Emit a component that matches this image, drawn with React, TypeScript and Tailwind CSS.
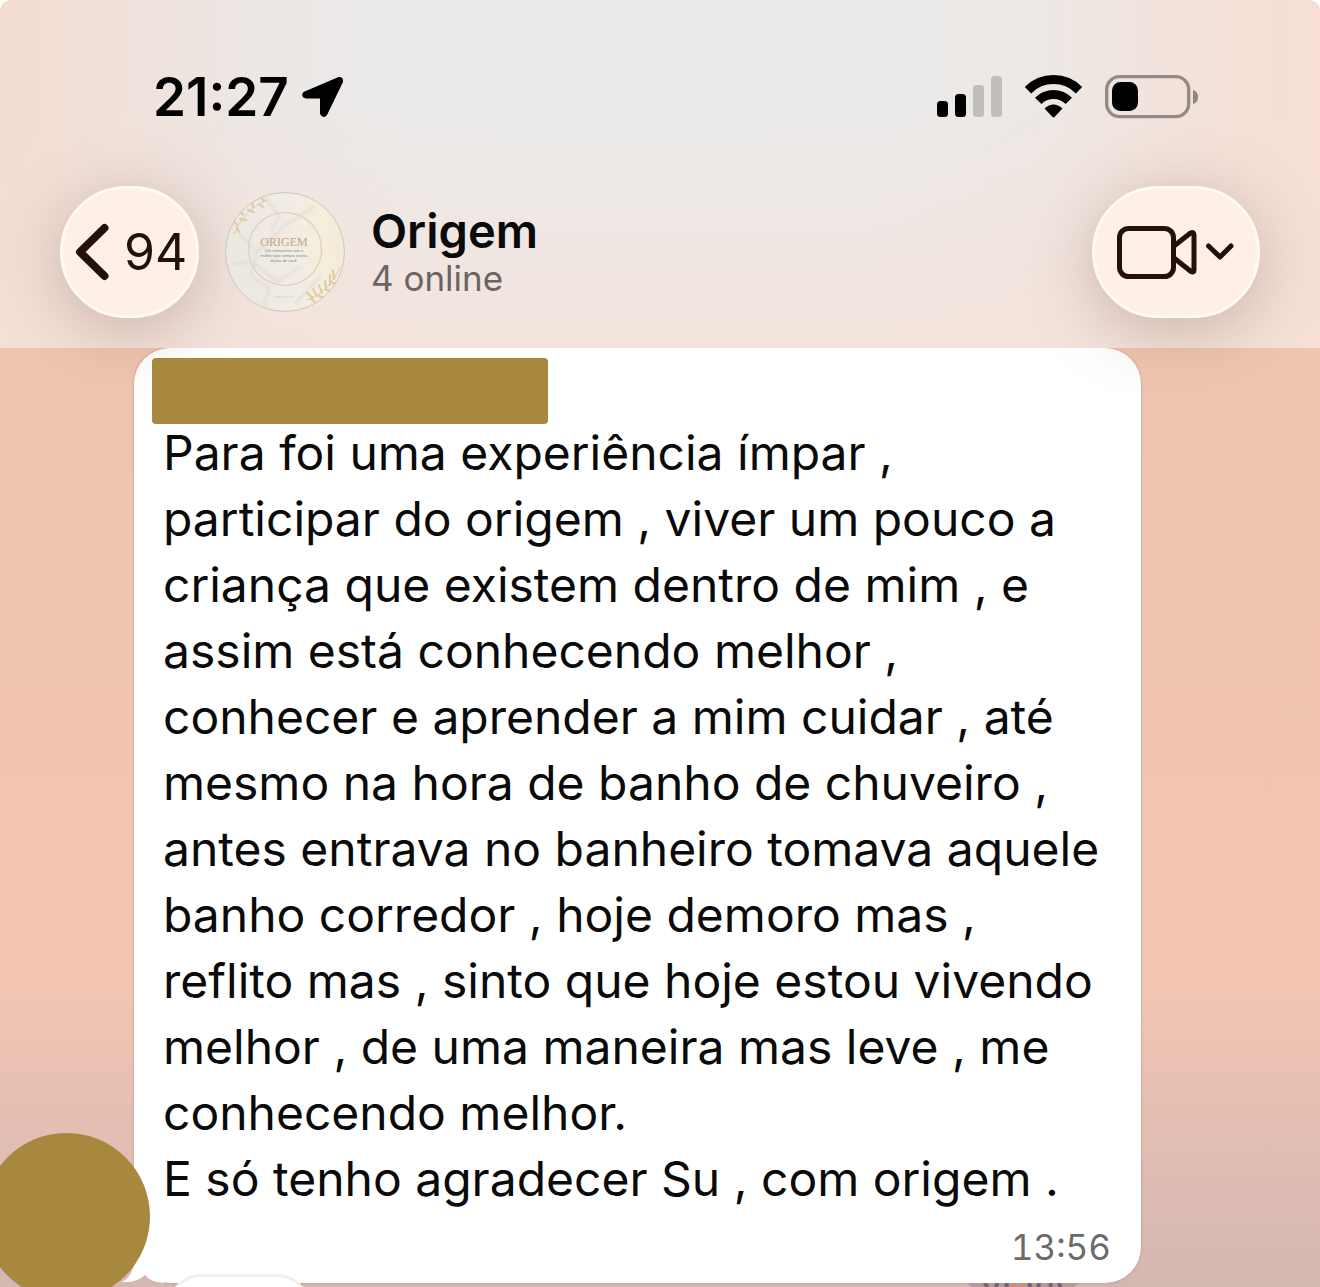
const MESSAGE = [
  "Para foi uma experiência ímpar ,",
  "participar do origem , viver um pouco a",
  "criança que existem dentro de mim , e",
  "assim está conhecendo melhor ,",
  "conhecer e aprender a mim cuidar , até",
  "mesmo na hora de banho de chuveiro ,",
  "antes entrava no banheiro tomava aquele",
  "banho corredor , hoje demoro mas ,",
  "reflito mas , sinto que hoje estou vivendo",
  "melhor , de uma maneira mas leve , me",
  "conhecendo melhor.",
  "E só tenho agradecer Su , com origem .",
].join("\n");

function LocationIcon() {
  return (
    <svg className="h-[44px] w-[44px]" viewBox="0 0 44 44" aria-hidden="true">
      <path
        d="M38 4.500 4 19Q3 20.800 5.500 21H21.500V38Q22.500 40.500 24 38.500L39.500 6.500Q40 4 38 4.500Z"
        stroke="#000"
        strokeWidth="5"
        strokeLinejoin="round"
      />
    </svg>
  );
}

function SignalIcon() {
  return (
    <svg className="h-[44px] w-[66px]" viewBox="0 0 66 44" aria-hidden="true">
      <rect x="0" y="26" width="11" height="16" rx="3.500" />
      <rect x="18" y="19" width="11" height="23" rx="3.500" />
      <rect x="36" y="10" width="11" height="32" rx="3.500" fill="#bfbebd" />
      <rect x="54" y="1" width="11" height="41" rx="3.500" fill="#bfbebd" />
    </svg>
  );
}

function WifiIcon() {
  return (
    <svg className="h-[44px] w-[58px]" viewBox="0 0 58 44" aria-hidden="true">
      <g fill="none" stroke="#000" strokeWidth="9">
        <path d="M3 15.200A36 36 0 0 1 54 15.200" />
        <path d="M13.200 25.900A21.600 21.600 0 0 1 43.800 25.900" />
      </g>
      <path d="M19.500 33.500Q28.500 25.500 37.500 33.500L29.500 42Q28.500 42.900 27.500 42Z" />
    </svg>
  );
}

function BatteryIcon() {
  return (
    <svg className="h-[44px] w-[94px]" viewBox="0 0 94 44" aria-hidden="true">
      <rect
        x="1.700"
        y="1.700"
        width="82"
        height="40"
        rx="13"
        fill="none"
        stroke="#938a86"
        strokeWidth="3.300"
      />
      <rect x="7" y="7" width="26" height="29" rx="8.500" />
      <path d="M88 15Q93 16.500 93 22Q93 27.500 88 29Z" fill="#8f8683" />
    </svg>
  );
}

function BackIcon() {
  return (
    <svg className="h-[60px] w-[36px]" viewBox="0 0 36 60" aria-hidden="true">
      <path
        d="M30.500 6 6 30 30.500 54"
        fill="none"
        stroke="#260f0a"
        strokeWidth="8"
        strokeLinecap="round"
        strokeLinejoin="round"
      />
    </svg>
  );
}

function VideoIcon() {
  return (
    <svg className="h-[54px] w-[118px]" viewBox="0 0 118 54" aria-hidden="true">
      <g
        fill="none"
        stroke="#260f0a"
        strokeWidth="5"
        strokeLinecap="round"
        strokeLinejoin="round"
      >
        <rect x="2.500" y="3.500" width="54" height="48" rx="9" />
        <path d="M57 21 73.500 8Q77 6.300 77 10V45Q77 48 74 46.500L57 33" />
        <path d="M91.500 21 103 32 114 21" strokeWidth="5" />
      </g>
    </svg>
  );
}

function GroupPhoto() {
  return (
    <svg
      className="h-[120px] w-[120px] shrink-0"
      viewBox="0 0 120 120"
      role="img"
      aria-label="Foto do grupo Origem"
    >
      <defs>
        <linearGradient id="marble" x1="0" y1="0.300" x2="1" y2="0.200">
          <stop offset="0" stopColor="#ebe8e1" />
          <stop offset="0.550" stopColor="#f1ede6" />
          <stop offset="0.850" stopColor="#f6eedb" />
          <stop offset="1" stopColor="#efe8dc" />
        </linearGradient>
        <clipPath id="disc">
          <circle cx="60" cy="60" r="59.500" />
        </clipPath>
        <filter id="soft">
          <feGaussianBlur stdDeviation="1.500" />
        </filter>
      </defs>
      <circle cx="60" cy="60" r="59.500" fill="url(#marble)" stroke="#d3c6b4" />
      <g clipPath="url(#disc)" fill="none">
        <g stroke="#dedad3" strokeWidth="2" filter="url(#soft)">
          <path d="M14 42 32 60 26 84 44 96 38 118M32 60 62 32 90 14" />
          <path d="M8 72 28 70 52 90 76 74M70 112 96 84" />
          <path d="M40 6 54 24 46 40" />
        </g>
        <circle cx="60" cy="57" r="36.500" stroke="#e4d2b9" strokeWidth="1.500" />
        <g stroke="#d9c096" strokeWidth="2" strokeLinecap="round" opacity="0.800">
          <path d="M9 42Q18 18 42 8" strokeWidth="1" />
          <path d="M12 33 8 28M15 27 21 28M18 23 15 18M23 18 29 20M28 15 27 9M34 12 38 15M39 9 36 5M12 36 14 40" />
          <path d="M82 108Q104 100 115 76" strokeWidth="1" />
          <path d="M88 106 82 101M92 104 88 97M97 101 94 93M101 97 100 89M105 93 105 83M109 87 108 78M94 104 101 106M101 98 108 99M107 91 113 92M86 107 90 110" />
        </g>
      </g>
      <g textAnchor="middle">
        <text
          x="59"
          y="54"
          className="font-['Liberation_Serif'] text-[12px]"
          fill="#c7a37c"
        >
          ORIGEM
        </text>
        <g className="font-['Liberation_Sans'] text-[4px]" fill="#8f8374">
          <text x="59" y="60">Um reencontro com a</text>
          <text x="59" y="65">mulher que sempre existiu</text>
          <text x="59" y="70">dentro de você.</text>
        </g>
      </g>
      <path d="M50 105H69" stroke="#d6c3a4" strokeDasharray="2 1" />
    </svg>
  );
}

function StatusBar() {
  return (
    <div className="flex items-center justify-between pr-[121px] pl-[153px]">
      <div className="flex items-center gap-3">
        <span className="text-[53px] leading-[60px] font-semibold">21:27</span>
        <LocationIcon />
      </div>
      <div className="flex items-center gap-[22px]">
        <SignalIcon />
        <WifiIcon />
        <BatteryIcon />
      </div>
    </div>
  );
}

function ChatHeader() {
  return (
    <header className="relative z-10 h-[348px] rounded-t-xl bg-[linear-gradient(to_bottom,transparent_30%,#f6e1d8c0),linear-gradient(to_right,#f3dcd1,#f0e1da_9%,#ece7e5_20%,#ebebeb_33%,#ebebeb_66%,#eee8e4_80%,#f3e1d9_91%,#f7dfd4)] pt-[67px]">
      <StatusBar />
      <div className="mt-[59px] flex items-center px-[60px]">
        <button
          type="button"
          aria-label="Voltar, 94 conversas"
          className="flex h-[132px] w-[139px] shrink-0 items-center gap-[14px] rounded-full border-3 border-[#fffaf0] bg-[#fef0e8] pl-[11px] text-[50px] text-[#260f0a] shadow-[0_12px_64px_#7b5c5259]"
        >
          <BackIcon />
          94
        </button>
        <div className="ml-[26px] flex flex-1 items-center gap-[26px]">
          <GroupPhoto />
          <div>
            <h1 className="text-[47px] leading-[52px] font-semibold text-[#0a0a0a]">
              Origem
            </h1>
            <p className="text-[35px] leading-[42px] text-[#6a6462]">4 online</p>
          </div>
        </div>
        <button
          type="button"
          aria-label="Chamada de vídeo"
          className="flex h-[132px] w-[168px] shrink-0 items-center justify-center rounded-full border-3 border-[#fffaf0] bg-[#fef0e6] shadow-[0_12px_64px_#7b5c5259]"
        >
          <VideoIcon />
        </button>
      </div>
    </header>
  );
}

function WallpaperFlowers() {
  return (
    <svg
      className="absolute top-full right-[62px] h-[12px] w-[112px]"
      viewBox="0 0 112 12"
      aria-hidden="true"
    >
      <path d="M0 0H112L96 12H14Z" fill="#b9979a" />
      <path
        d="M18 0 24 12M30 0 28 12M40 0 38 12M62 0 66 12M72 0 70 12M84 0 82 12M92 0 96 12"
        stroke="#7a6070"
        strokeWidth="4"
      />
      <path d="M46 0 50 12M56 0 54 12" stroke="#c98f70" strokeWidth="5" />
    </svg>
  );
}

function Message() {
  return (
    <div className="flex items-end pr-[179px]">
      <div className="z-10 -mr-4 -mb-[17px] -ml-[17px] h-[167px] w-[167px] shrink-0 rounded-full bg-[#a8873e]" />
      <article className="relative min-w-0 flex-1 rounded-[36px] bg-white pt-[10px] pr-[30px] pb-1 pl-[18px] shadow-[0_0_3px_#8c5f5066]">
        <WallpaperFlowers />
        <svg
          className="absolute bottom-0 left-[-12px] h-[36px] w-[48px]"
          viewBox="0 0 48 36"
          aria-hidden="true"
        >
          <path d="M12 0V16Q10 30 0 35Q15 36 23 28Q28 35 42 36L48 20V0Z" fill="#fff" />
        </svg>
        <div className="relative z-20 h-[66px] w-[396px] rounded bg-[#a8873e]" />
        <p className="relative -mt-1 pl-[11px] text-[48px] leading-[66px] whitespace-pre text-[#0a0a0a]">
          {MESSAGE}
        </p>
        <time className="mt-[3px] block text-right text-[35px] leading-[64px] text-[#6b6b6b] tabular-nums">
          13:56
        </time>
        <div className="absolute -bottom-[57px] left-[34px] h-[66px] w-[142px] rounded-[36px] border-3 border-[#f4efea] bg-white" />
      </article>
    </div>
  );
}

export default function App() {
  return (
    <div className="h-screen overflow-hidden bg-white font-[Inter,'Liberation_Sans',sans-serif]">
      <div className="flex min-h-full flex-col rounded-t-xl bg-[linear-gradient(to_bottom,#efc4b0_27%,#f1c5b2_77%,#e6bfb3_86%,#d3b7b1)]">
        <ChatHeader />
        <main className="flex-1">
          <Message />
        </main>
      </div>
    </div>
  );
}
